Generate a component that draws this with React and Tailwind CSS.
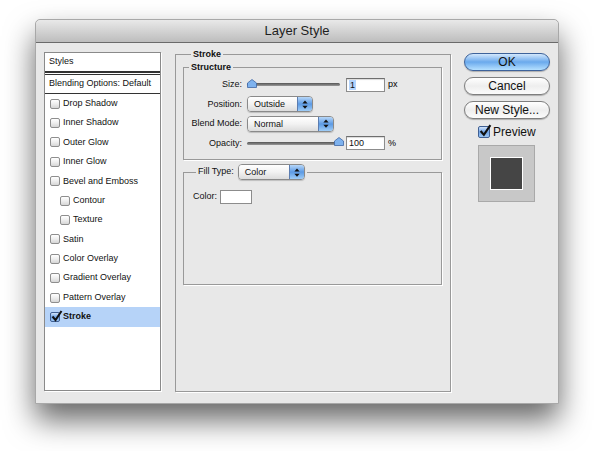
import React from 'react';

const Box = ({ checked }) =>
  checked ? (
    <span className="relative inline-block w-[10px] h-[10px] shrink-0 rounded-[2px] border border-[#3f5f93] bg-linear-to-b from-[#d2e4fa] via-[#6fa3e6] to-[#9cc7f5]">
      <svg viewBox="0 0 12 12" className="absolute left-[0px] top-[-3px] w-[12px] h-[12px]">
        <path d="M1.5 6.5 L4.5 10 L10.5 1" stroke="#111" strokeWidth="2" fill="none" />
      </svg>
    </span>
  ) : (
    <span className="inline-block w-[10px] h-[10px] shrink-0 rounded-[2px] border border-[#8e8e8e] bg-linear-to-b from-[#ffffff] via-[#eeeeee] to-[#d6d6d6]" />
  );

const Arrows = () => (
  <svg viewBox="0 0 8 11" className="w-[6px] h-[9px]">
    <path d="M4 0 L7.5 4 L0.5 4 Z M4 11 L7.5 7 L0.5 7 Z" fill="#111" />
  </svg>
);

const Popup = ({ value, width }) => (
  <div className={`flex h-[16px] ${width} rounded-[4px] border border-[#8a8a8a] overflow-hidden shadow-[0_1px_1px_rgba(0,0,0,0.18)]`}>
    <div className="flex-1 pl-[6px] bg-linear-to-b from-[#ffffff] via-[#f2f2f2] to-[#dcdcdc] text-[9px] leading-[14px] text-[#111]">
      {value}
    </div>
    <div className="w-[15px] flex items-center justify-center border-l border-[#5c7db0] bg-linear-to-b from-[#b7d7f8] via-[#5c9ae4] to-[#9fcdf7]">
      <Arrows />
    </div>
  </div>
);

const Thumb = () => (
  <svg viewBox="0 0 10 9" className="w-[10px] h-[9px]">
    <path d="M5 0.5 L9.5 4 L9.5 8.5 L0.5 8.5 L0.5 4 Z" fill="#7eb2ee" stroke="#3f66a3" strokeWidth="0.8" />
  </svg>
);

const Slider = ({ atEnd }) => (
  <div className="relative w-[93px] h-[10px] flex items-center">
    <div className="w-full h-[3px] rounded-full bg-linear-to-b from-[#555] to-[#9a9a9a]" />
    <div className={`absolute top-[-1px] ${atEnd ? 'left-[87px]' : 'left-[0px]'}`}>
      <Thumb />
    </div>
  </div>
);

const Field = ({ children }) => (
  <div className="w-[39px] h-[14px] bg-white border border-[#8c8c8c] border-t-[#6e6e6e] shadow-[inset_0_1px_1px_rgba(0,0,0,0.15)] pl-[2px] text-[9px] leading-[12px] text-[#111]">
    {children}
  </div>
);

const styles = [
  { name: 'Drop Shadow' },
  { name: 'Inner Shadow' },
  { name: 'Outer Glow' },
  { name: 'Inner Glow' },
  { name: 'Bevel and Emboss' },
  { name: 'Contour', sub: true },
  { name: 'Texture', sub: true },
  { name: 'Satin' },
  { name: 'Color Overlay' },
  { name: 'Gradient Overlay' },
  { name: 'Pattern Overlay' },
  { name: 'Stroke', on: true },
];

const Row = ({ label, children }) => (
  <div className="flex items-center h-[19.5px]">
    <div className="w-[59px] pr-[1px] text-right text-[9px] text-[#111]">{label}</div>
    <div className="flex items-center ml-[4px] gap-[6px]">{children}</div>
  </div>
);

const Button = ({ children, primary }) => (
  <div
    className={`h-[18px] w-[86px] rounded-full flex items-center justify-center text-[12px] leading-none text-[#111] shadow-[0_1px_1px_rgba(0,0,0,0.25)] ${
      primary
        ? 'border border-[#3e639b] bg-linear-to-b from-[#d3e8fc] via-[#6aa9ec] to-[#b5e0ff]'
        : 'border border-[#7e7e7e] bg-linear-to-b from-[#ffffff] via-[#eeeeee] to-[#fbfbfb]'
    }`}
  >
    {children}
  </div>
);

export default function App() {
  return (
    <div className="w-[594px] h-[451px] bg-white pt-[19px] pl-[35px] font-['Liberation_Sans',Arial,sans-serif] overflow-hidden">
      <div className="w-[524px] h-[385px] flex flex-col bg-[#e8e8e8] border border-[#a8a8a8] rounded-t-[5px] shadow-[0_16px_30px_rgba(0,0,0,0.6)]">
        <div className="h-[23px] shrink-0 flex items-center justify-center rounded-t-[5px] border-b border-[#6a6a6a] bg-linear-to-b from-[#e9e9e9] to-[#bdbdbd] text-[13px] text-[#1e1e1e]">
          Layer Style
        </div>

        <div className="flex pt-[9px] pl-[8px]">
          {/* Styles list */}
          <div className="w-[117px] h-[339px] bg-white border border-[#8a8a8a] shadow-[1px_1px_0_#fff] text-[9px] text-[#111]">
            <div className="h-[20px] pl-[4px] flex items-center border-b-[2px] border-[#333]">Styles</div>
            <div className="h-[20px] pl-[4px] flex items-center border-t border-b border-[#333] mt-[1px]">
              Blending Options: Default
            </div>
            {styles.map((s) => (
              <div
                key={s.name}
                className={`h-[19.4px] flex items-center gap-[3px] ${s.sub ? 'pl-[15px]' : 'pl-[5px]'} ${
                  s.on ? 'bg-[#b6d3f8] font-bold' : ''
                }`}
              >
                <Box checked={s.on} />
                <span>{s.name}</span>
              </div>
            ))}
          </div>

          {/* Stroke settings */}
          <fieldset className="ml-[14px] w-[276px] h-[343px] border border-[#999] shadow-[1px_1px_0_#fff] px-[7px] mt-[-3px]">
            <legend className="ml-[8px] px-[2px] text-[9px] font-bold leading-[11px] text-[#111]">Stroke</legend>

            <fieldset className="w-[259px] h-[98px] border border-[#999] shadow-[1px_1px_0_#fff] mt-[2px]">
              <legend className="ml-[5px] px-[2px] text-[9px] font-bold leading-[11px] text-[#111]">Structure</legend>
              <div className="flex flex-col pt-[2px]">
                <Row label="Size:">
                  <Slider />
                  <Field>
                    <span className="bg-[#b4d4fd] px-[1px]">1</span>
                  </Field>
                  <span className="text-[9px] -ml-[3px]">px</span>
                </Row>
                <Row label="Position:">
                  <Popup value="Outside" width="w-[66px]" />
                </Row>
                <Row label="Blend Mode:">
                  <Popup value="Normal" width="w-[87px]" />
                </Row>
                <Row label="Opacity:">
                  <Slider atEnd />
                  <Field>100</Field>
                  <span className="text-[9px] -ml-[3px]">%</span>
                </Row>
              </div>
            </fieldset>

            <fieldset className="w-[259px] h-[121px] border border-[#999] shadow-[1px_1px_0_#fff] mt-[4px]">
              <legend className="ml-[12px] px-[2px] flex items-center gap-[4px] text-[9px] text-[#111]">
                <span>Fill Type:</span>
                <Popup value="Color" width="w-[67px]" />
              </legend>
              <div className="flex items-center gap-[3px] pl-[9px] pt-[10px] text-[9px] text-[#111]">
                <span>Color:</span>
                <div className="w-[32px] h-[14px] bg-white border border-[#8c8c8c]" />
              </div>
            </fieldset>
          </fieldset>

          {/* Buttons */}
          <div className="ml-[13px] pt-[1px] flex flex-col w-[86px]">
            <Button primary>OK</Button>
            <div className="mt-[6px]">
              <Button>Cancel</Button>
            </div>
            <div className="mt-[6px]">
              <Button>New Style...</Button>
            </div>
            <div className="mt-[4px] ml-[14px] flex items-center gap-[3px] text-[12px] text-[#111]">
              <span className="relative inline-block w-[12px] h-[12px] rounded-[2px] border border-[#3f5f93] bg-linear-to-b from-[#d2e4fa] via-[#6fa3e6] to-[#9cc7f5]">
                <svg viewBox="0 0 12 12" className="absolute left-[0px] top-[-3px] w-[13px] h-[13px]">
                  <path d="M1.5 6.5 L4.5 10 L10.5 1" stroke="#111" strokeWidth="2" fill="none" />
                </svg>
              </span>
              <span>Preview</span>
            </div>
            <div className="mt-[4px] ml-[14px] w-[57px] h-[57px] bg-[#c8c8c8] border border-[#a9a9a9] flex items-center justify-center">
              <div className="w-[33px] h-[33px] bg-[#454545] border border-white" />
            </div>
          </div>
        </div>
      </div>
    </div>
  );
}
